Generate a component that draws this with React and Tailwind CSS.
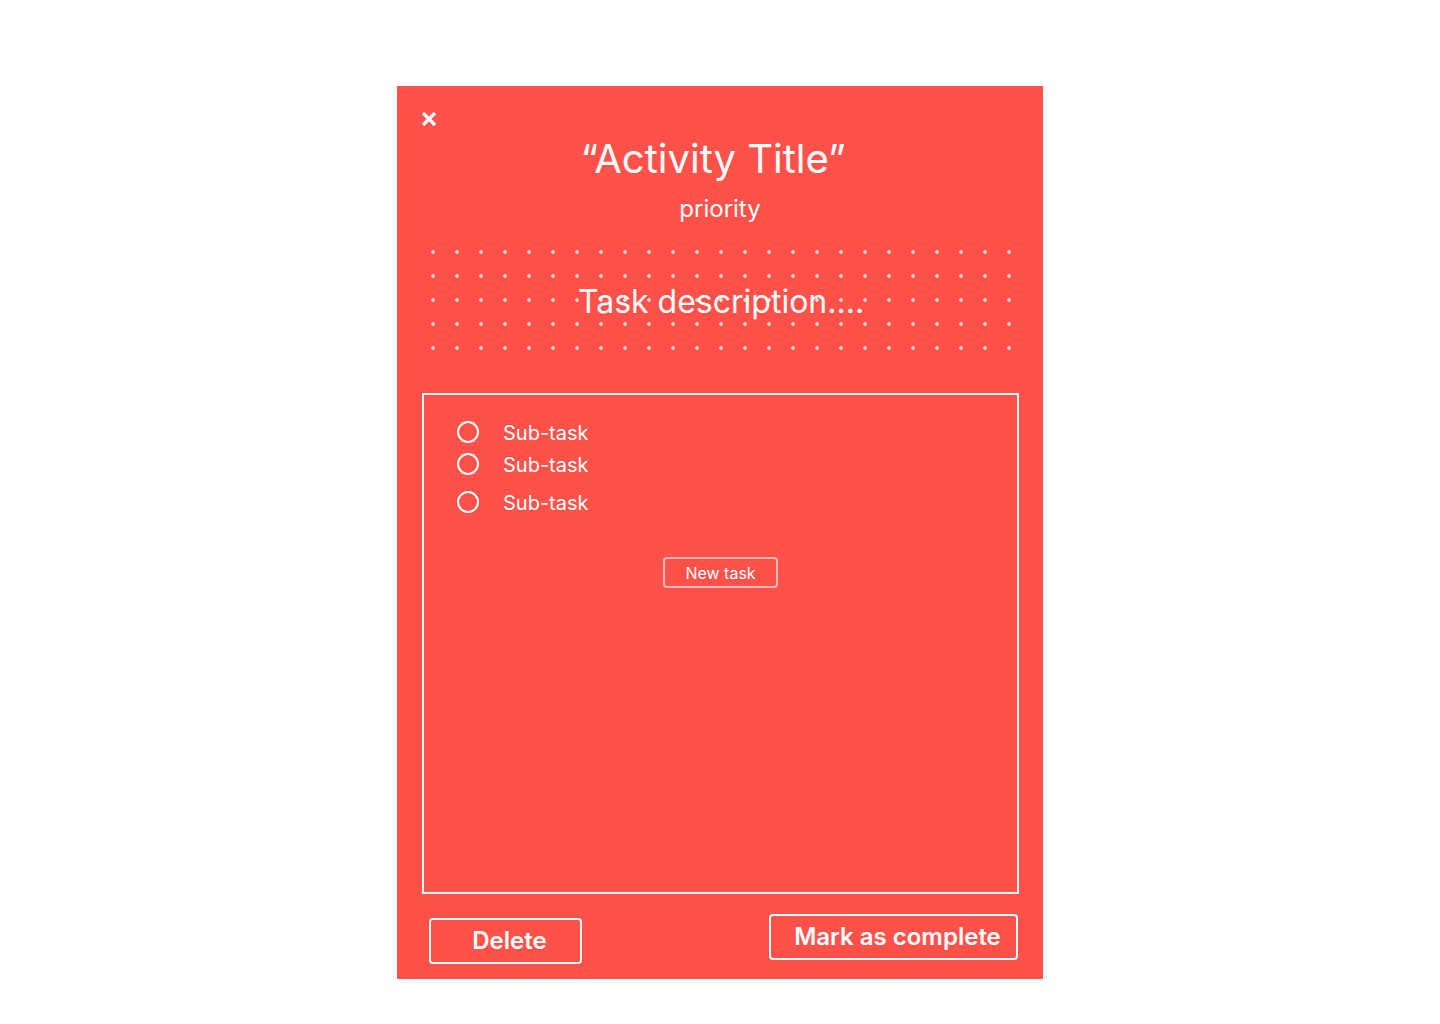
import React from "react";

const subTasks = [
  { id: 1, label: "Sub-task", gap: "mt-0" },
  { id: 2, label: "Sub-task", gap: "mt-[4px]" },
  { id: 3, label: "Sub-task", gap: "mt-[10px]" },
];

function CloseIcon() {
  return (
    <svg viewBox="0 0 18 18" className="w-[18px] h-[18px]" fill="none">
      <path
        d="M3 3 L15 15 M15 3 L3 15"
        stroke="white"
        strokeWidth="3.2"
        strokeLinecap="butt"
      />
    </svg>
  );
}

// Task detail card
export default function App() {
  return (
    <div className="min-h-screen bg-white pt-[86px] font-['Inter','Noto_Sans',sans-serif]">
      <div className="mx-auto w-[646px] h-[893px] bg-[#FF5149] flex flex-col pt-6 px-6 text-white">
        <button className="w-[18px] h-[18px] -ml-[1px]">
          <CloseIcon />
        </button>

        <h1 className="mt-[7px] text-[40px] leading-[48px] text-center pr-[14px] font-normal">
          “Activity Title”
        </h1>
        <p className="mt-[10px] text-[24px] leading-[32px] text-center">
          priority
        </p>

        <div className="mt-[15px] h-[120px] w-[600px] flex items-center justify-center bg-[radial-gradient(circle,rgba(255,255,255,0.8)_1.5px,transparent_2px)] bg-[length:24px_24px]">
          <p className="text-[32px] leading-[40px] pt-[3px]">Task description....</p>
        </div>

        <div className="mt-[33px] ml-[1px] h-[501px] border-2 border-white pt-[23px] pl-[33px] flex flex-col">
          {subTasks.map((t) => (
            <div
              key={t.id}
              className={`flex items-center gap-[24px] h-[28px] ${t.gap}`}
            >
              <span className="w-[22px] h-[22px] rounded-full border-2 border-white" />
              <span className="text-[20px] leading-[28px] pt-[2px]">{t.label}</span>
            </div>
          ))}

          <div className="mt-[41px] -ml-[33px] flex justify-center">
            <button className="w-[115px] h-[31px] rounded-[4px] border-2 border-white/60 text-[16px] leading-none">
              New task
            </button>
          </div>
        </div>

        <div className="mt-[20px] flex justify-between items-start">
          <button className="ml-2 mt-1 w-[153px] h-[46px] rounded-[4px] border-2 border-white pl-2 text-[24px] font-semibold">
            Delete
          </button>
          <button className="mr-[1px] w-[249px] h-[46px] rounded-[4px] border-2 border-white pl-2 text-[24px] font-semibold">
            Mark as complete
          </button>
        </div>
      </div>
    </div>
  );
}
